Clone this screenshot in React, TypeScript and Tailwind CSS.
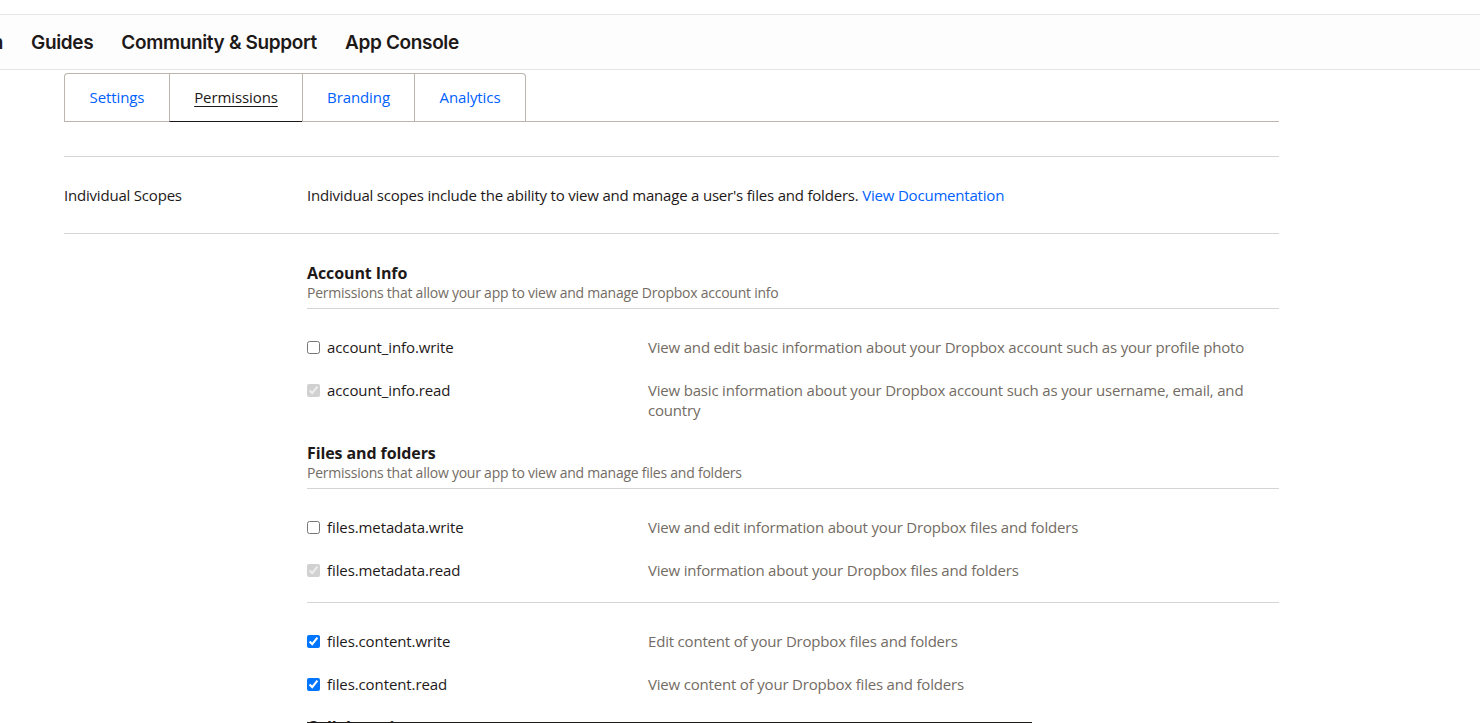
import type { ReactNode } from "react";

type Scope = {
    name: string;
    description: string;
    state: "off" | "locked" | "on";
};

type Group = {
    title?: string;
    subtitle?: string;
    blocks: Scope[][];
};

/* scope data as shown on the permissions tab */
const groups: Group[] = [
    {
        title: "Account Info",
        subtitle: "Permissions that allow your app to view and manage Dropbox account info",
        blocks: [
            [
                {
                    name: "account_info.write",
                    description:
                        "View and edit basic information about your Dropbox account such as your profile photo",
                    state: "off",
                },
                {
                    name: "account_info.read",
                    description:
                        "View basic information about your Dropbox account such as your username, email, and country",
                    state: "locked",
                },
            ],
        ],
    },
    {
        title: "Files and folders",
        subtitle: "Permissions that allow your app to view and manage files and folders",
        blocks: [
            [
                {
                    name: "files.metadata.write",
                    description: "View and edit information about your Dropbox files and folders",
                    state: "off",
                },
                {
                    name: "files.metadata.read",
                    description: "View information about your Dropbox files and folders",
                    state: "locked",
                },
            ],
            [
                {
                    name: "files.content.write",
                    description: "Edit content of your Dropbox files and folders",
                    state: "on",
                },
                {
                    name: "files.content.read",
                    description: "View content of your Dropbox files and folders",
                    state: "on",
                },
            ],
        ],
    },
    {
        title: "Collaboration",
        subtitle: "Permissions that allow your app to view and manage sharing and collaboration settings",
        blocks: [],
    },
];

const tabs = [
    { label: "Settings", width: "w-[105px]" },
    { label: "Permissions", width: "w-[133px]" },
    { label: "Branding", width: "w-[112px]" },
    { label: "Analytics", width: "w-[112px]" },
];

function ScopeRow({ scope }: { scope: Scope }) {
    return (
        <div className="flex items-start">
            <label className="flex items-start w-[341px] shrink-0 text-[15px] leading-[20px] tracking-[-0.1px] text-[#1e1919]">
                <span className="flex items-center h-[20px] w-[20px] shrink-0">
                    <input
                        type="checkbox"
                        className="w-[13px] h-[13px]"
                        defaultChecked={scope.state != "off"}
                        disabled={scope.state == "locked"}
                    />
                </span>
                {scope.name}
            </label>
            <span className="text-[15px] leading-[20px] tracking-[-0.19px] text-[#736c64] w-[631px]">
                {scope.description}
            </span>
        </div>
    );
}

function NavLink({ children }: { children: ReactNode }) {
    return <span className="whitespace-nowrap shrink-0">{children}</span>;
}

export default function App() {
    return (
        <div className="min-h-[723px] bg-white font-['Open_Sans',sans-serif] overflow-hidden">
            {/* top strip */}
            <div className="h-[15px] border-b border-[#e9e7e3]"></div>

            {/* site nav, cut off on the left */}
            <div className="h-[55px] pt-[2px] border-b border-[#e6e4e0] bg-[#fdfdfd] flex items-center font-['Inter',sans-serif] font-semibold text-[19px] text-[#1e1919] tracking-[-0.35px]">
                <div className="flex justify-end w-[3px] overflow-hidden shrink-0">
                    <NavLink>Documentation</NavLink>
                </div>
                <div className="flex items-center gap-[28px] ml-[28px]">
                    <NavLink>Guides</NavLink>
                    <NavLink>Community &amp; Support</NavLink>
                    <NavLink>App Console</NavLink>
                </div>
            </div>

            <div className="ml-[64px] w-[1215px]">
                {/* tabs */}
                <div className="mt-[3px] flex border-b border-[#bbb5ae]">
                    {tabs.map((t, i) => {
                        const active = t.label == "Permissions";
                        return (
                            <div
                                key={t.label}
                                className={
                                    "h-[48px] flex items-center justify-center border-t border-l border-[#bbb5ae] text-[15px] tracking-[-0.1px] " +
                                    t.width +
                                    (i == 0 ? " rounded-tl-[4px]" : "") +
                                    (i == tabs.length - 1 ? " border-r rounded-tr-[4px]" : "") +
                                    (active
                                        ? " h-[49px] -mb-px border-b border-b-[#1e1919] text-[#1e1919] underline underline-offset-[3px]"
                                        : " text-[#0061fe]")
                                }
                            >
                                {t.label}
                            </div>
                        );
                    })}
                </div>

                {/* individual scopes intro */}
                <div className="mt-[34px] border-t border-b border-[#d6d4d2] h-[78px] flex items-center text-[15px] tracking-[-0.2px] text-[#1e1919]">
                    <span className="w-[243px] shrink-0">Individual Scopes</span>
                    <span>
                        Individual scopes include the ability to view and manage a user's files and folders.{" "}
                        <a className="text-[#0061fe]">View Documentation</a>
                    </span>
                </div>

                <div className="ml-[243px] pt-[30px]">
                    {groups.map((g) => (
                        <div key={g.title} className="mb-[24px] last:mb-0">
                            <div className="text-[16px] leading-[19px] font-bold tracking-[-0.1px] text-[#1e1919]">
                                {g.title}
                            </div>
                            <div className="text-[14px] leading-[19px] tracking-[-0.24px] text-[#736c64] pb-[6px] border-b border-[#d6d4d2]">
                                {g.subtitle}
                            </div>
                            {g.blocks.map((b, bi) => (
                                <div
                                    key={bi}
                                    className={
                                        "flex flex-col gap-[23px] pt-[28px]" +
                                        (bi < g.blocks.length - 1 ? " pb-[22px] border-b border-[#d6d4d2]" : "")
                                    }
                                >
                                    {b.map((s) => (
                                        <ScopeRow key={s.name} scope={s} />
                                    ))}
                                </div>
                            ))}
                        </div>
                    ))}
                </div>
            </div>

            {/* dark rule over the bottom edge */}
            <div className="fixed left-[307px] top-[722px] w-[725px] h-[1px] bg-[#1e1919]"></div>
        </div>
    );
}
